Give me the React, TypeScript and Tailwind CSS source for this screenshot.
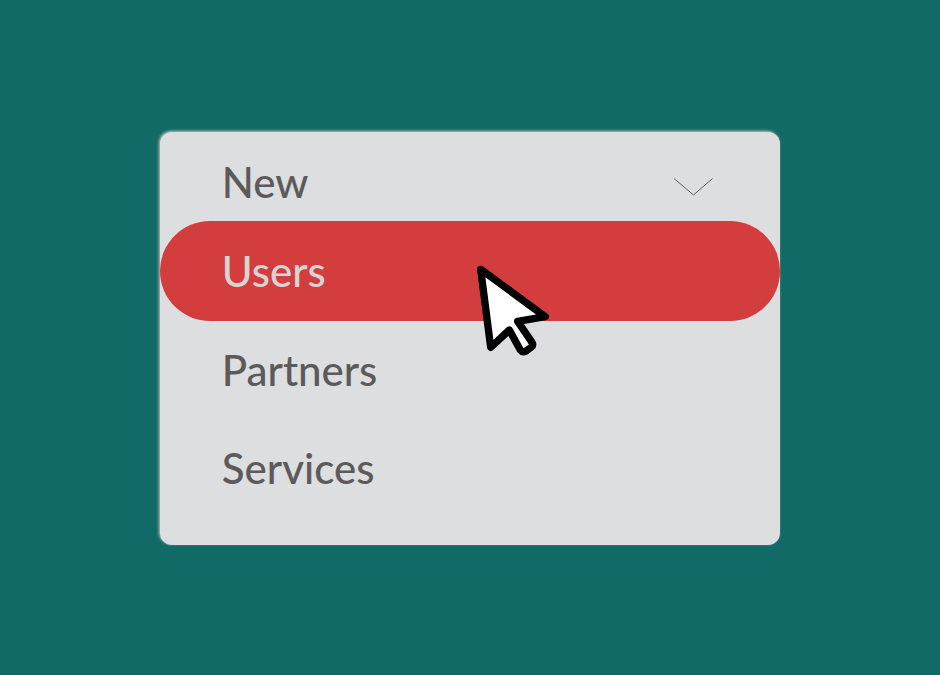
import { useState } from 'react';
import clsx from 'clsx';

const options = ['Users', 'Partners', 'Services'];

const Chevron = () => (
    <svg className="w-10 h-7" viewBox="0 0 40 28" fill="none" stroke="#5c5c5c" strokeWidth="1" aria-hidden="true">
        <path d="M1 10.5 L20.5 27 L39.5 10.5" />
    </svg>
);

const Pointer = () => (
    <svg
        className="absolute left-[51%] top-11 z-10 w-[74px] h-[92px] pointer-events-none"
        viewBox="48 45 222 276"
        fill="#ffffff"
        stroke="#000000"
        strokeWidth="22"
        strokeLinejoin="round"
        aria-hidden="true"
    >
        <path d="M62 58 L256 200 L173 214 L216 277 Q221 286 213 292 L198 303 Q188 309 181 300 L148 240 L92 292 Z" />
    </svg>
);

export default function App() {
    const [active, setActive] = useState('Users');

    return (
        <main className="min-h-screen flex items-center justify-center bg-[#126a66] font-['Lato','Open_Sans',sans-serif] text-[42px] leading-none font-medium text-[#5c5a5a]">
            <div className="w-[66%] mt-0.5 pb-7 rounded-xl bg-[#dddee0] shadow-[-1px_-1px_3px_#c4c4bc]">
                <button type="button" aria-expanded="true" className="w-full h-[89px] pt-2.5 pl-[62px] pr-[67px] flex items-center justify-between text-left">
                    New
                    <Chevron />
                </button>
                <ul>
                    {options.map((option) => (
                        <li key={option} className="relative">
                            <button
                                type="button"
                                onClick={() => setActive(option)}
                                className={clsx(
                                    'w-full px-[62px] rounded-full flex items-center text-left',
                                    option === active ? 'h-[100px] bg-[#d43d3e] text-[#d8d4d4]' : 'h-[98px]'
                                )}
                            >
                                {option}
                            </button>
                            {option === active && <Pointer />}
                        </li>
                    ))}
                </ul>
            </div>
        </main>
    );
}
